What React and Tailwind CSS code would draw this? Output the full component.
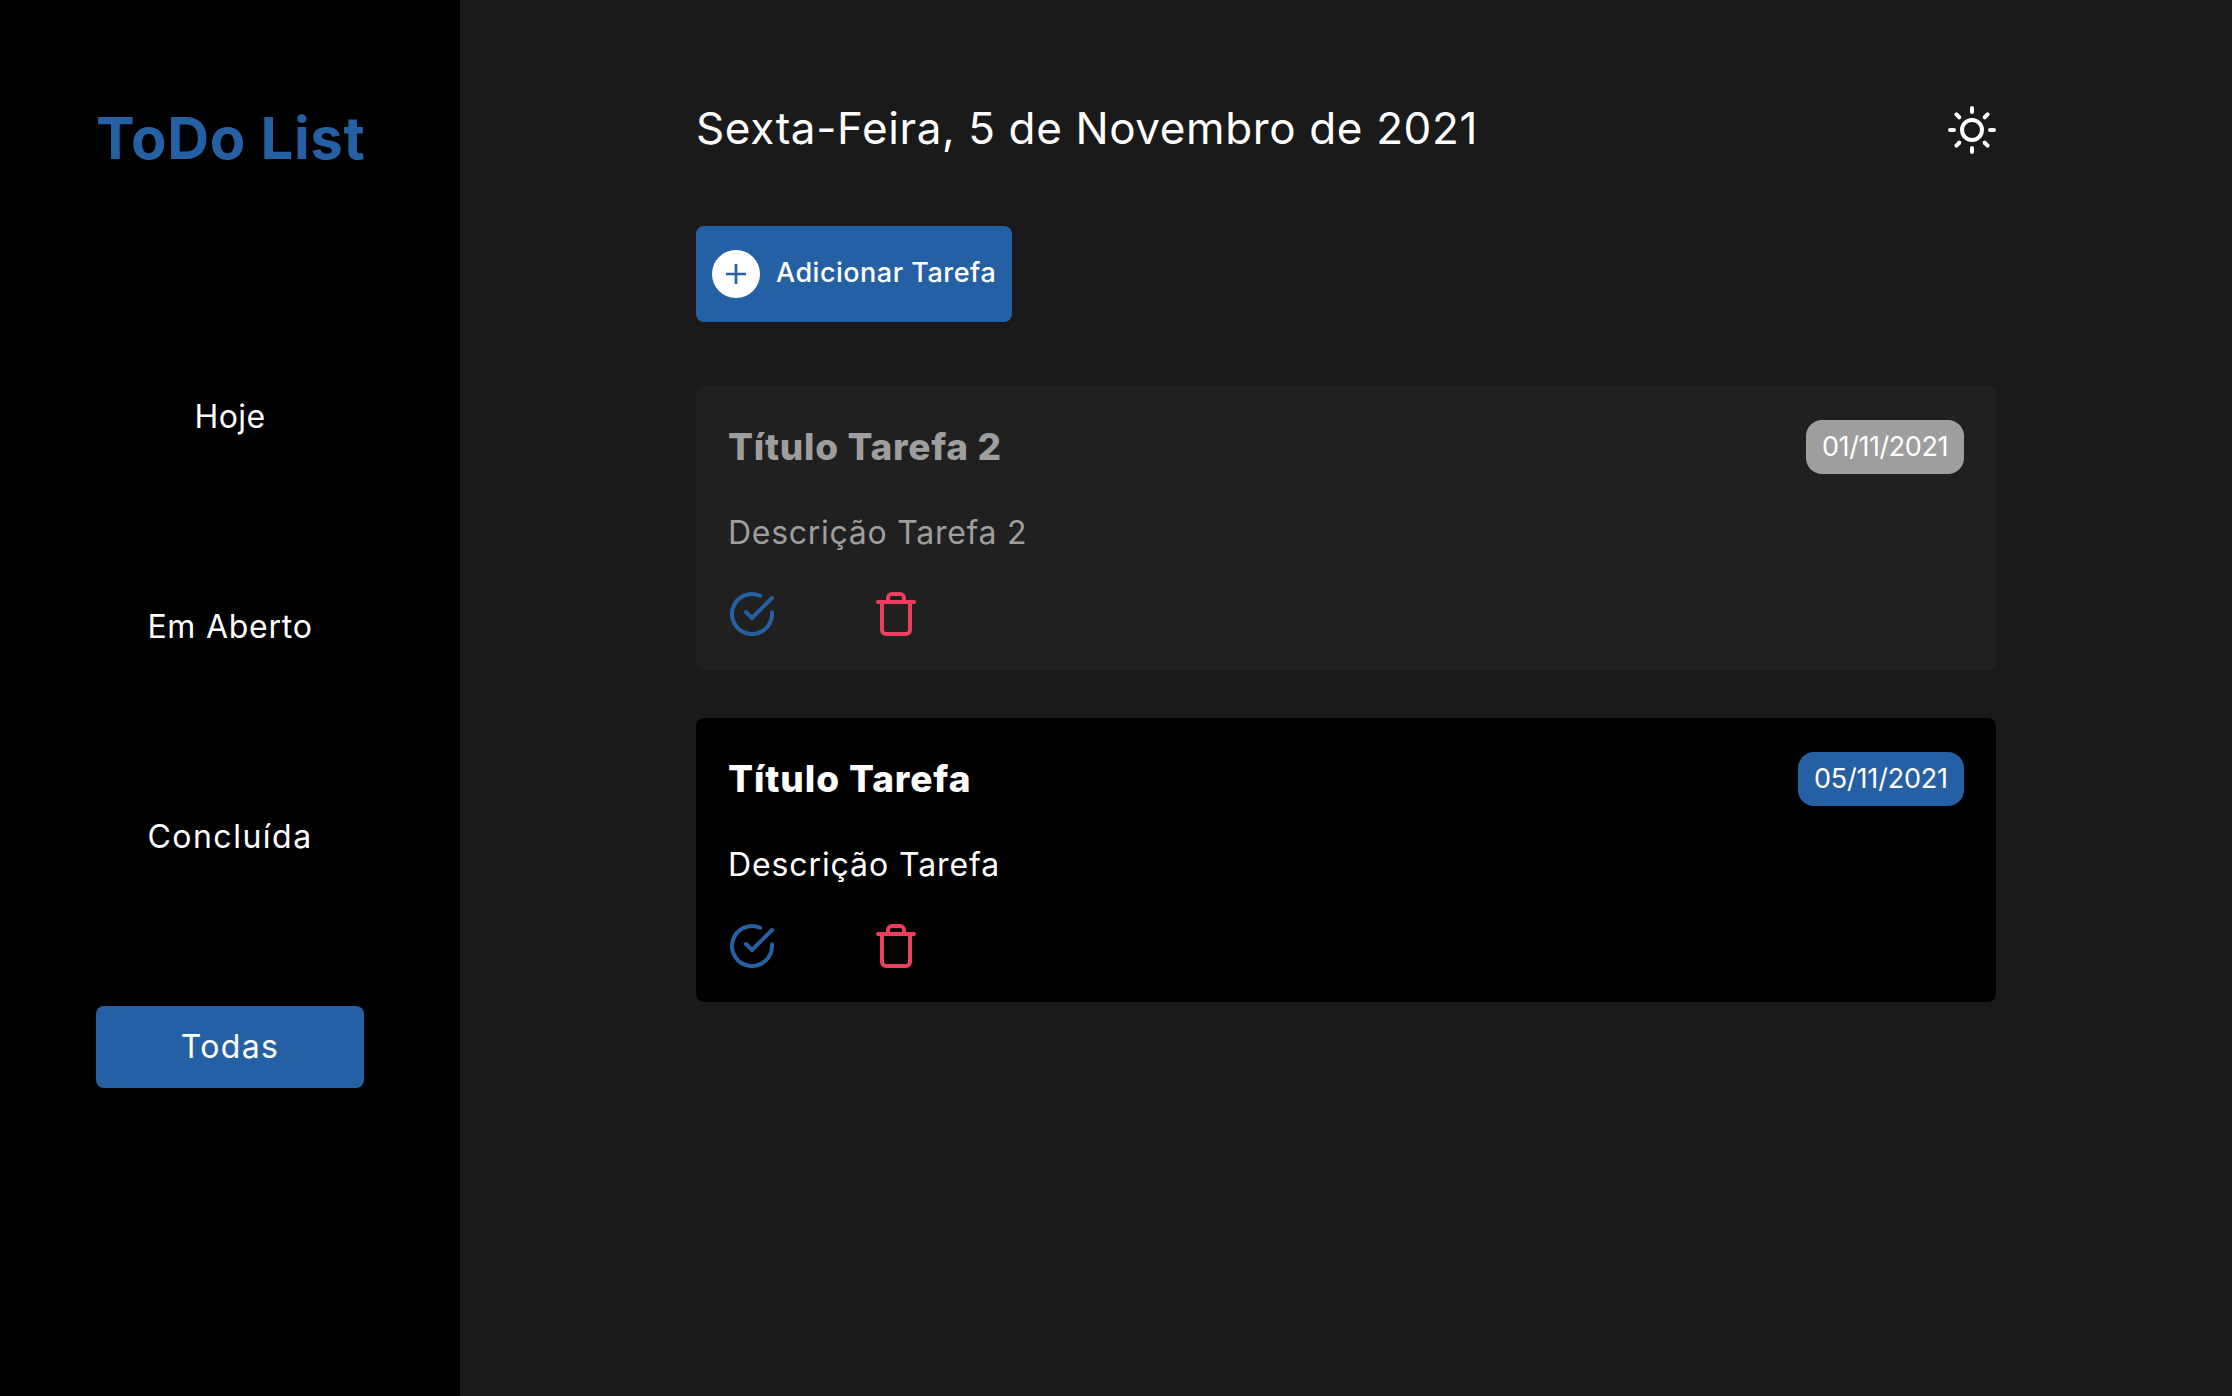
import { FiCheckCircle, FiSun, FiTrash } from "react-icons/fi";
import { IoMdAdd } from "react-icons/io";

const filters = [
  { label: "Hoje", tracking: "tracking-[0.4px]" },
  { label: "Em Aberto", tracking: "tracking-[0.75px]" },
  { label: "Concluída", tracking: "tracking-[1.5px]" },
  { label: "Todas", tracking: "tracking-[1.3px]", active: true },
];

const tasks = [
  {
    title: "Título Tarefa 2",
    description: "Descrição Tarefa 2",
    date: "01/11/2021",
    card: "bg-[#202020] text-[#9e9e9e]",
    badge: "w-[158px] bg-[#9e9e9e] tracking-[-0.44px]",
    titleTracking: "tracking-[0.7px]",
    textTracking: "tracking-[0.72px]",
  },
  {
    title: "Título Tarefa",
    description: "Descrição Tarefa",
    date: "05/11/2021",
    card: "bg-black text-white",
    badge: "w-[166px] bg-[#2660a4] tracking-[-0.2px]",
    titleTracking: "tracking-[0.9px]",
    textTracking: "tracking-[0.9px]",
  },
];

function Task({ title, description, date, card, badge, titleTracking, textTracking }) {
  return (
    <article className={`flex h-[284px] flex-col rounded-lg p-8 ${card}`}>
      <div className="flex h-[58px] items-center justify-between">
        <h2 className={`pb-0.5 text-[37px] font-extrabold leading-none ${titleTracking}`}>{title}</h2>
        <span className={`flex h-[54px] items-center whitespace-nowrap rounded-2xl px-4 text-[27px] text-white ${badge}`}>
          {date}
        </span>
      </div>
      <p className={`mt-7 h-[58px] text-[32px] leading-[58px] ${textTracking}`}>{description}</p>
      <div className="mt-7 flex gap-24">
        <button><FiCheckCircle size={48} color="#2660a4" /></button>
        <button><FiTrash size={48} color="#eb3f5d" /></button>
      </div>
    </article>
  );
}

export default function App() {
  return (
    <div className="flex h-screen bg-[#1a1a1a] font-[Inter,sans-serif] text-white">
      <aside className="flex w-[460px] flex-col bg-black px-24">
        <h1 className="mt-[93px] h-[91px] whitespace-nowrap text-[58px] font-bold leading-[90px] tracking-[0.7px] text-[#2660a4]">
          ToDo List
        </h1>
        <nav className="mt-48 flex flex-col gap-32">
          {filters.map(({ label, tracking, active }) => (
            <button
              key={label}
              className={`h-[82px] rounded-lg text-[32px] ${tracking} ${active ? "bg-[#2660a4]" : ""}`}
            >
              {label}
            </button>
          ))}
        </nav>
      </aside>
      <main className="mx-auto flex w-[1300px] flex-col">
        <header className="mt-24 flex h-[68px] items-center justify-between">
          <span className="whitespace-nowrap pb-1 text-[44px] tracking-[0.62px]">
            Sexta-Feira, 5 de Novembro de 2021
          </span>
          <FiSun size={48} />
        </header>
        <button className="mt-[62px] flex h-24 w-[316px] items-center gap-4 rounded-lg bg-[#2660a4] px-4 text-[27px] font-medium tracking-[0.5px]">
          <span className="flex size-12 shrink-0 items-center justify-center rounded-full bg-white">
            <IoMdAdd size={32} color="#2660a4" />
          </span>
          <span className="whitespace-nowrap pb-0.5">Adicionar Tarefa</span>
        </button>
        <section className="mt-16 flex flex-col gap-12">
          {tasks.map((task) => (
            <Task key={task.title} {...task} />
          ))}
        </section>
      </main>
    </div>
  );
}
